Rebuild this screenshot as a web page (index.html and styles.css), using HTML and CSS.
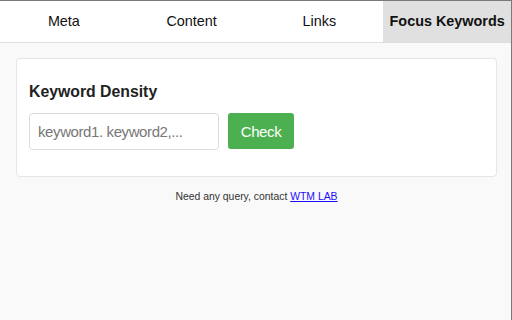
FILE: index.html
```html
<!DOCTYPE html>
<html>
<head>
<meta charset="utf-8">
<link rel="stylesheet" href="styles.css">
</head>
<body>
<div class="frame">
  <nav class="tabs">
    <div class="tab">Meta</div>
    <div class="tab">Content</div>
    <div class="tab">Links</div>
    <div class="tab active">Focus Keywords</div>
  </nav>
  <main class="content">
    <section class="card">
      <h3 class="title">Keyword Density</h3>
      <div class="row">
        <input class="kw-input" type="text" placeholder="keyword1. keyword2,...">
        <button class="check-btn">Check</button>
      </div>
    </section>
    <p class="footer">Need any query, contact <a href="#">WTM LAB</a></p>
  </main>
</div>
</body>
</html>
```
FILE: styles.css
```css
html, body {
  margin: 0;
  padding: 0;
  height: 100%;
}
body {
  font-family: "Liberation Sans", Arial, sans-serif;
  background: #f9f9f9;
}
.frame {
  box-sizing: border-box;
  height: 320px;
  width: 512px;
  border-top: 1px solid #7a7a7a;
  border-right: 1px solid #7a7a7a;
  background: #f9f9f9;
}
.tabs {
  display: grid;
  grid-template-columns: repeat(4, 1fr);
  background: #fff;
  border-bottom: 1px solid #dedede;
}
.tab {
  height: 41px;
  line-height: 41px;
  text-align: center;
  font-size: 14.4px;
  color: #111;
}
.tab.active {
  background: #e0e0e0;
  font-weight: bold;
}
.content {
  padding: 15px 14px 0 16px;
}
.card {
  background: #fff;
  border: 1px solid #e6e6e6;
  border-radius: 4px;
  padding: 23px 12px 26px;
}
.title {
  margin: 0 0 11px;
  font-size: 15.8px;
  font-weight: bold;
  color: #222;
  line-height: 20px;
}
.row {
  display: flex;
  align-items: flex-start;
}
.kw-input {
  box-sizing: border-box;
  width: 190px;
  height: 37px;
  border: 1px solid #dcdcdc;
  border-radius: 4px;
  padding: 0 8px;
  font-family: "Liberation Sans", Arial, sans-serif;
  font-size: 15px;
  letter-spacing: -0.4px;
  color: #333;
  outline: none;
}
.kw-input::placeholder {
  color: #777;
}
.check-btn {
  box-sizing: border-box;
  margin-left: 9px;
  width: 66px;
  height: 36px;
  padding: 0;
  background: #4caf50;
  color: #fff;
  border: none;
  border-radius: 3px;
  font-family: "Liberation Sans", Arial, sans-serif;
  font-size: 15px;
  letter-spacing: -0.4px;
}
.footer {
  margin: 13px 0 0;
  text-align: center;
  font-size: 10.4px;
  line-height: 13px;
  color: #333;
}
.footer a {
  color: #1a0dff;
}
```
